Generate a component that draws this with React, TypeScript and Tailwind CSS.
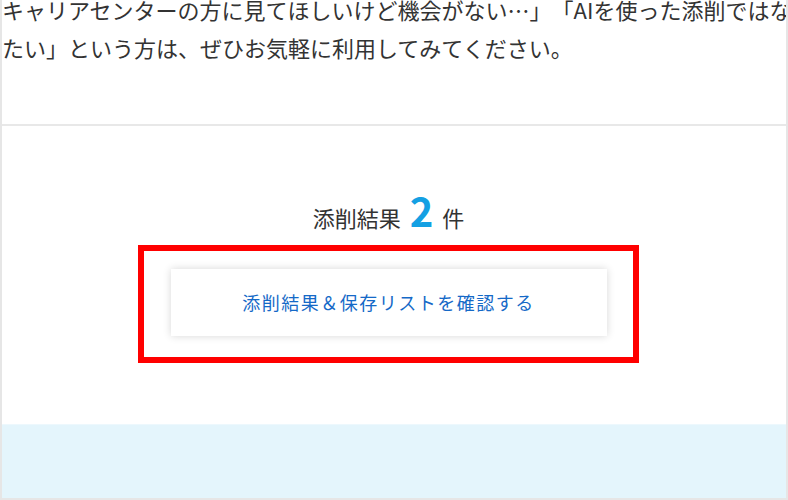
import React from "react";

const font = {
  fontFamily: '"Noto Sans CJK JP", "Noto Sans", sans-serif',
};

const App = () => {
  return (
    <div
      className="w-[788px] h-[500px] bg-white border-x-2 border-b-2 border-[#e6e6e6] overflow-hidden flex flex-col"
      style={font}
    >
      {/* intro text */}
      <div className="h-[124px] overflow-hidden">
        <div className="mt-[-10px] whitespace-nowrap text-[22px] text-[#333333] [text-spacing-trim:space-all]">
          <div className="h-[38px] leading-[38px]">
            キャリアセンターの方に見てほしいけど機会がない…」「AIを使った添削ではなく
          </div>
          <div className="h-[38px] leading-[38px]">
            たい」という方は、ぜひお気軽に利用してみてください。
          </div>
        </div>
      </div>

      <div className="h-[2px] bg-[#e8e8e8]" />

      {/* result */}
      <div className="flex-1 flex flex-col items-center pt-[62px] pr-[11px]">
        <div className="flex items-end h-[44px] text-[#333333]">
          <span className="text-[22px] leading-[30px]">添削結果</span>
          <span className="mx-[9px] text-[40px] leading-[44px] font-bold text-[#14a0e3]">
            2
          </span>
          <span className="text-[22px] leading-[30px]">件</span>
        </div>

        <div className="mt-[13px] w-[501px] h-[118px] border-[6px] border-[#ff0000] flex items-center justify-center pb-[3px]">
          <button className="w-[436px] h-[67px] bg-white shadow-[0_0_8px_rgba(0,0,0,0.16)] text-[18px] tracking-[1.5px] text-[#1569c7]">
            添削結果＆保存リストを確認する
          </button>
        </div>
      </div>

      <div className="h-[74px] bg-[#e4f5fc] border-t border-[#edf8fd]" />
    </div>
  );
};

export default App;
